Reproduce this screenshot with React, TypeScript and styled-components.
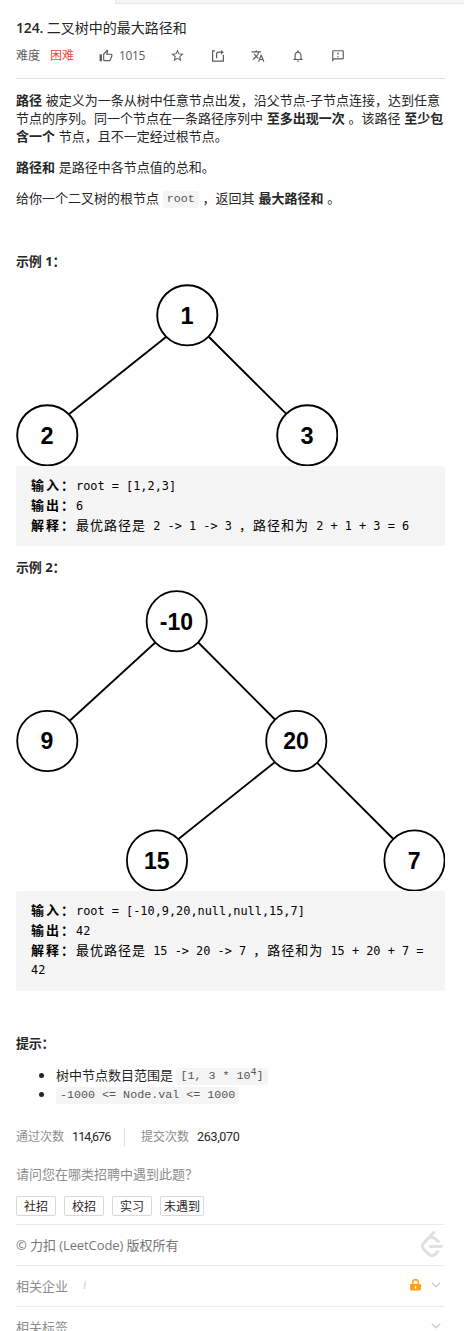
import React from 'react';
import styled, { createGlobalStyle } from 'styled-components';
import { MdOutlineThumbUp, MdStarBorder, MdTranslate, MdNotificationsNone, MdOutlineFeedback } from 'react-icons/md';
import { SiLeetcode } from 'react-icons/si';

const GlobalStyle = createGlobalStyle`
  * { box-sizing: border-box; }
  html, body { margin: 0; height: 1331px; overflow: hidden; background: #fff; }
  body {
    font-family: "Open Sans", "Noto Sans CJK SC", sans-serif;
    font-size: 13px;
    color: #262626;
  }
`;

const Page = styled.main`
  width: 464px;
  height: 1331px;
  overflow: hidden;
  background: #fff;
`;

const TabStrip = styled.div`
  height: 4px;
  margin-left: 115px;
  background: #f5f5f5;
  border-bottom: 1px solid #e8e8e8;
  border-left: 1px solid #e8e8e8;
`;

const Panel = styled.div`
  width: 429px;
  margin-left: 16px;
`;

const Header = styled.header`
  height: 75px;
  padding-top: 14px;
  border-bottom: 1px solid #e0e0e0;
`;

const Title = styled.h1`
  margin: 0 0 7px;
  font-size: 14px;
  font-weight: 400;
  line-height: 20px;
  white-space: pre;
`;

const Number = styled.span`
  letter-spacing: -0.15px;
  font-weight: 600;
`;

const Meta = styled.div`
  display: flex;
  align-items: center;
  height: 21px;
  font-size: 12px;
  line-height: 20px;
  color: #5c5c5c;
`;

const Level = styled.span`
  margin-left: 10px;
  color: #ef4743;
`;

const Action = styled.span<{ $gap: number }>`
  display: flex;
  align-items: center;
  margin-left: ${(p) => p.$gap}px;
  svg { display: block; }
`;

const Likes = styled.span`
  width: 26px;
  margin-left: 6px;
  letter-spacing: -0.35px;
`;

const Content = styled.section`
  padding-top: 12px;
`;

const Para = styled.p`
  margin: 0 0 13px;
  min-height: 18px;
  line-height: 18px;
  word-spacing: 0.4px;
  white-space: nowrap;
`;

const Heading = styled(Para)`
  font-weight: 700;
  letter-spacing: -0.2px;
`;

const Code = styled.code`
  display: inline-block;
  height: 17px;
  padding: 0 4px;
  border-radius: 3px;
  background: #f5f5f5;
  color: #555;
  font-family: "Liberation Mono", monospace;
  font-size: 11.7px;
  line-height: 17px;
  vertical-align: middle;
  white-space: pre;
  word-spacing: 0;
  sup { font-size: 10px; line-height: 0; vertical-align: 4px; }
`;

const Tree = styled.svg`
  display: block;
  margin-top: 14px;
  text {
    font-family: "Liberation Sans", sans-serif;
    font-weight: 700;
    text-anchor: middle;
    fill: #000;
  }
`;

const Sample = styled.pre`
  margin: 0 0 12px;
  padding: 9px 15px 11px;
  border-radius: 3px;
  background: #f5f5f5;
  color: #000;
  font-family: "DejaVu Sans Mono", monospace;
  font-size: 11.88px;
  line-height: 20px;
`;

const SampleLine = styled.div`
  height: 20px;
`;

const Cjk = styled.span`
  font-family: "Noto Sans CJK SC", sans-serif;
  font-size: 13px;
  letter-spacing: 1px;
`;

const Label = styled(Cjk)`
  font-weight: 700;
  letter-spacing: 2px;
`;

const Hints = styled.ul`
  margin: 0;
  padding: 0 0 0 40px;
  li { height: 19px; line-height: 19px; white-space: nowrap; }
  li::marker { font-size: 15px; }
`;

const Stats = styled.div`
  display: flex;
  align-items: center;
  height: 18px;
  margin-top: 25px;
  font-size: 12px;
  line-height: 18px;
  color: #8c8c8c;
`;

const Count = styled.span<{ $track: number; $width: number }>`
  width: ${(p) => p.$width}px;
  margin-left: 8px;
  letter-spacing: ${(p) => p.$track}px;
  font-family: Roboto, sans-serif;
  font-size: 12.5px;
  font-weight: 400;
  color: #262626;
  white-space: nowrap;
`;

const Separator = styled.i`
  width: 1px;
  height: 18px;
  margin: 0 16px 0 15px;
  background: #ddd;
`;

const Question = styled.div`
  margin-top: 19px;
  line-height: 18px;
  color: #8c8c8c;
`;

const Tags = styled.div`
  display: flex;
  gap: 8px;
  margin: 13px 0 8px;
`;

const Tag = styled.button<{ $width: number }>`
  width: ${(p) => p.$width}px;
  height: 20px;
  padding: 1px 0 0;
  border: 1px solid #d9d9d9;
  border-radius: 2px;
  background: #fff;
  color: #262626;
  font: inherit;
  font-size: 12px;
  line-height: 17px;
  white-space: nowrap;
`;

const Row = styled.div<{ $strong?: boolean }>`
  display: flex;
  align-items: center;
  height: 41px;
  padding-bottom: 2px;
  border-top: 1px solid #ebebeb;
  letter-spacing: ${(p) => (p.$strong ? '-0.08px' : 'normal')};
  color: ${(p) => (p.$strong ? '#757575' : '#8c8c8c')};
`;

const Right = styled.span<{ $inset: number }>`
  display: flex;
  align-items: center;
  gap: 10px;
  margin-left: auto;
  margin-right: ${(p) => p.$inset}px;
`;

const Info = styled.i`
  margin-left: 15px;
  font-family: "Liberation Serif", serif;
  font-size: 12px;
  color: #ccc;
`;

const ShareIcon = () => (
  <svg width="14" height="14" viewBox="0 0 14 14" fill="none" stroke="#5c5c5c" strokeWidth="1.2">
    <path d="M4 1.9H1.6V12.2H12.4V5.8M5.6 9.2V5.2Q5.6 3.2 7.6 3.2H11.2" />
    <path d="M10 1L12.8 3.2L10 5.4Z" fill="#5c5c5c" stroke="none" />
  </svg>
);

const LockIcon = () => (
  <svg width="11" height="12" viewBox="0 0 11 12">
    <path d="M2.6 6V3.6a2.9 2.9 0 0 1 5.8 0V6" fill="none" stroke="#ffa116" strokeWidth="1.5" />
    <rect x="0" y="5" width="11" height="6.6" rx="1" fill="#ffa116" />
    <rect x="4.8" y="7.2" width="1.4" height="2.4" fill="#fff" />
  </svg>
);

const Chevron = () => (
  <svg width="10" height="6" viewBox="0 0 10 6" fill="none" stroke="#ccc" strokeWidth="1.3">
    <path d="M.8 .8L5 4.8L9.2 .8" />
  </svg>
);

type TreeNode = { x: number; y: number; label: string };
type TreeProps = { width: number; height: number; size: number; stroke: number; nodes: TreeNode[]; edges: number[][] };

const TreeDiagram = ({ width, height, size, stroke, nodes, edges }: TreeProps) => (
  <Tree width={width} height={height} viewBox={`0 0 ${width} ${height}`}>
    <g fill="none" stroke="#000" strokeWidth={stroke}>
      {edges.map(([x1, y1, x2, y2]) => (
        <line key={`${x1}-${y1}`} x1={x1} y1={y1} x2={x2} y2={y2} />
      ))}
      {nodes.map((n) => (
        <circle key={n.label} cx={n.x} cy={n.y} r="30.1" />
      ))}
    </g>
    {nodes.map((n) => (
      <text key={n.label} x={n.x - 0.3} y={n.y + size * 0.36} fontSize={size}>{n.label}</text>
    ))}
  </Tree>
);

export default function App() {
  return (
    <Page>
      <GlobalStyle />
      <TabStrip />
      <Panel>
        <Header>
          <Title><Number>124. </Number>二叉树中的最大路径和</Title>
          <Meta>
            <span>难度</span>
            <Level>困难</Level>
            <Action $gap={25}><MdOutlineThumbUp size={14} /></Action>
            <Likes>1015</Likes>
            <Action $gap={25}><MdStarBorder size={15} /></Action>
            <Action $gap={26}><ShareIcon /></Action>
            <Action $gap={26}><MdTranslate size={14} /></Action>
            <Action $gap={26}><MdNotificationsNone size={14} /></Action>
            <Action $gap={26}><MdOutlineFeedback size={14} /></Action>
          </Meta>
        </Header>
        <Content>
          <Para>
            <b>路径</b> 被定义为一条从树中任意节点出发，沿父节点-子节点连接，达到任意<br />
            节点的序列。同一个节点在一条路径序列中 <b>至多出现一次</b> 。该路径 <b>至少包</b><br />
            <b>含一个</b> 节点，且不一定经过根节点。
          </Para>
          <Para><b>路径和</b> 是路径中各节点值的总和。</Para>
          <Para>给你一个二叉树的根节点 <Code>root</Code> ，返回其 <b>最大路径和</b> 。</Para>
          <Para>&nbsp;</Para>
          <Heading>示例 1：</Heading>
          <TreeDiagram
            width={322}
            height={182}
            size={23.5}
            stroke={1.9}
            nodes={[
              { x: 171.3, y: 31.3, label: '1' },
              { x: 31.3, y: 151.3, label: '2' },
              { x: 291.3, y: 151.3, label: '3' },
            ]}
            edges={[[150, 53, 53.5, 129.7], [193, 53, 270, 129.7]]}
          />
          <Sample>
            <SampleLine><Label>输入：</Label>root = [1,2,3]</SampleLine>
            <SampleLine><Label>输出：</Label>6</SampleLine>
            <SampleLine><Label>解释：</Label><Cjk>最优路径是</Cjk> 2 -&gt; 1 -&gt; 3 <Cjk>，路径和为</Cjk> 2 + 1 + 3 = 6</SampleLine>
          </Sample>
          <Heading>示例 2：</Heading>
          <TreeDiagram
            width={429}
            height={301}
            size={23}
            stroke={1.8}
            nodes={[
              { x: 160.7, y: 31.3, label: '-10' },
              { x: 31.3, y: 151, label: '9' },
              { x: 280.3, y: 151, label: '20' },
              { x: 141, y: 270.5, label: '15' },
              { x: 398.5, y: 270.5, label: '7' },
            ]}
            edges={[[139.3, 52.5, 54, 130.5], [182.3, 52.5, 259, 129.5], [259, 172, 162.5, 249], [301, 172.7, 377.3, 249]]}
          />
          <Sample>
            <SampleLine><Label>输入：</Label>root = [-10,9,20,null,null,15,7]</SampleLine>
            <SampleLine><Label>输出：</Label>42</SampleLine>
            <SampleLine><Label>解释：</Label><Cjk>最优路径是</Cjk> 15 -&gt; 20 -&gt; 7 <Cjk>，路径和为</Cjk> 15 + 20 + 7 =</SampleLine>
            <SampleLine>42</SampleLine>
          </Sample>
          <Para>&nbsp;</Para>
          <Heading>提示：</Heading>
          <Hints>
            <li>树中节点数目范围是 <Code>[1, 3 * 10<sup>4</sup>]</Code></li>
            <li><Code>-1000 &lt;= Node.val &lt;= 1000</Code></li>
          </Hints>
        </Content>
        <Stats>
          <span>通过次数</span>
          <Count $track={-0.9} $width={37}>114,676</Count>
          <Separator />
          <span>提交次数</span>
          <Count $track={-0.3} $width={43}>263,070</Count>
        </Stats>
        <Question>请问您在哪类招聘中遇到此题？</Question>
        <Tags>
          <Tag $width={40}>社招</Tag>
          <Tag $width={40}>校招</Tag>
          <Tag $width={40}>实习</Tag>
          <Tag $width={44}>未遇到</Tag>
        </Tags>
        <Row $strong>
          © 力扣 (LeetCode) 版权所有
          <Right $inset={0}><SiLeetcode size={26} color="#e0e0e0" /></Right>
        </Row>
        <Row>
          相关企业 <Info>i</Info>
          <Right $inset={4}><LockIcon /><Chevron /></Right>
        </Row>
        <Row>
          相关标签
          <Right $inset={4}><Chevron /></Right>
        </Row>
      </Panel>
    </Page>
  );
}
